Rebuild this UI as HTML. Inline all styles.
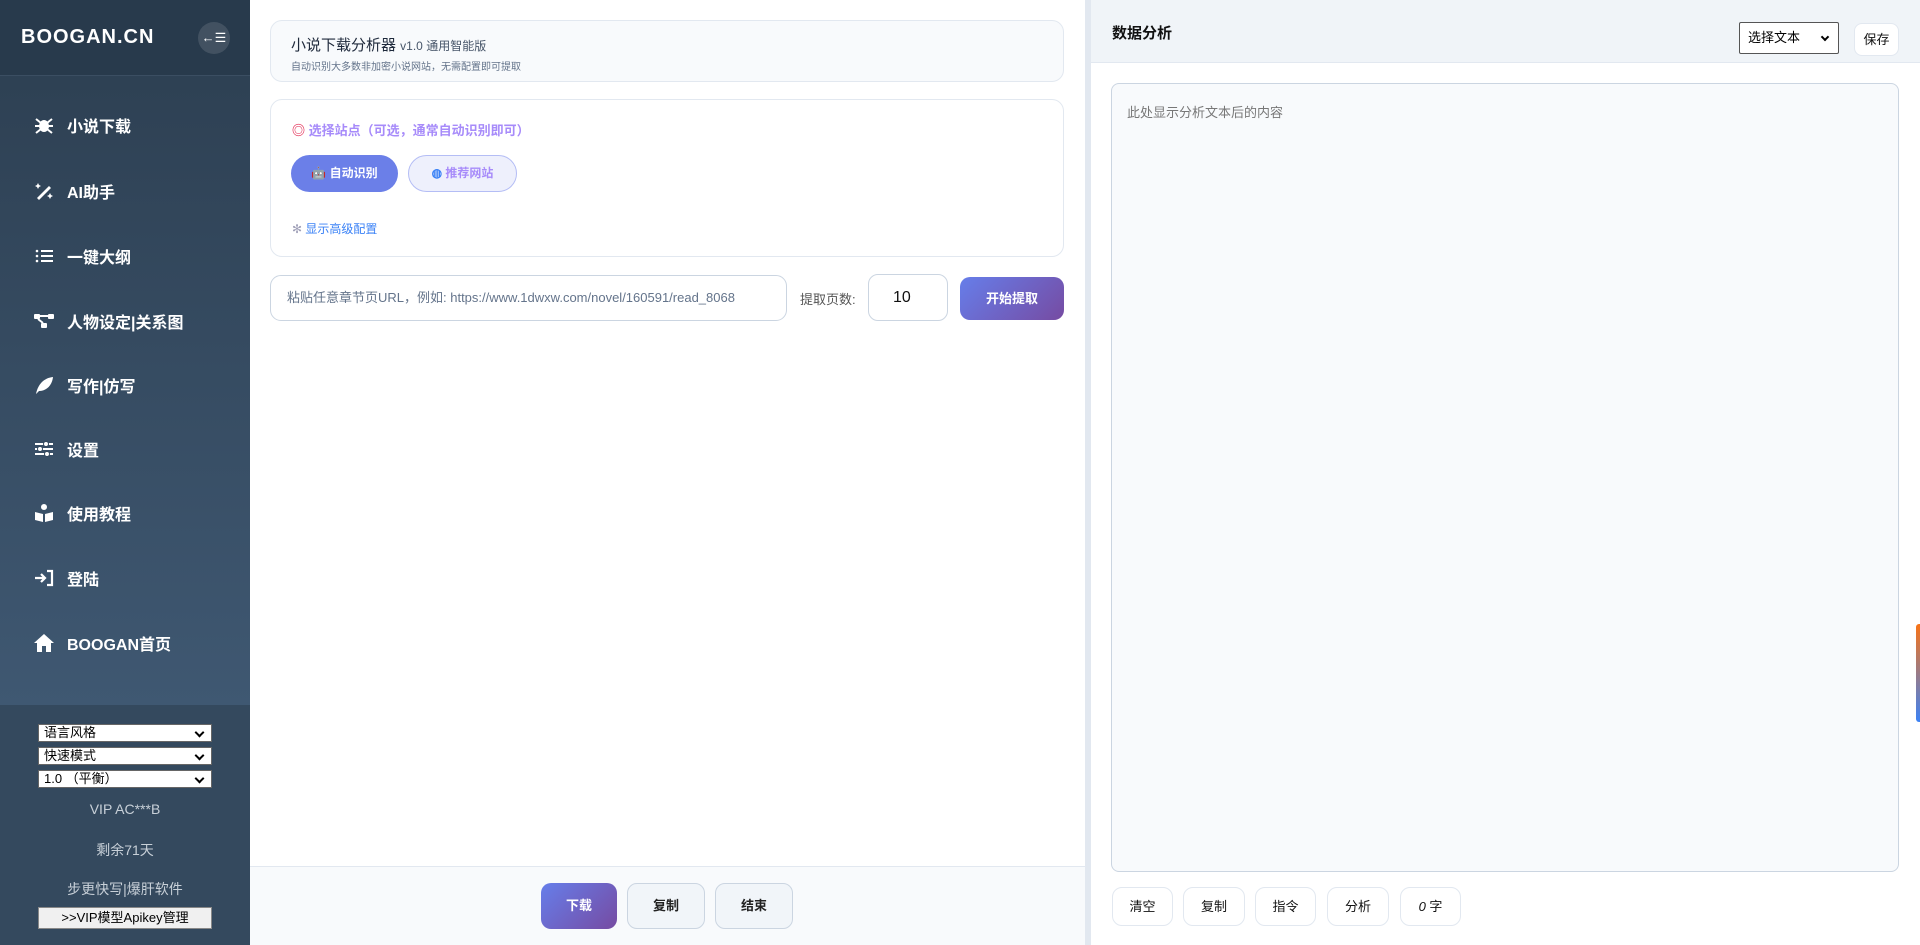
<!DOCTYPE html>
<html><head><meta charset="utf-8">
<style>
*{box-sizing:border-box;margin:0;padding:0}
body{width:1920px;height:945px;overflow:hidden;font-family:"Liberation Sans","Noto Sans CJK SC",sans-serif;background:#fff;position:relative}
.abs{position:absolute}
#sb{left:0;top:0;width:250px;height:945px;background:linear-gradient(180deg,#2c3e50 0%,#3f5872 75%);}
#sbh{left:0;top:0;width:250px;height:76px;background:#283a4c;border-bottom:1px solid #3b4e62}
.logo{left:21px;top:26px;color:#fff;font-size:20px;font-weight:bold;letter-spacing:1px}
.tog{left:198px;top:22px;width:32px;height:32px;border-radius:50%;background:rgba(255,255,255,.12);color:#fff;font-size:13px;line-height:32px;text-align:center}
.nav{left:34px;color:#fff;font-size:16px;font-weight:bold;display:flex;align-items:center;height:24px}
.nav svg{width:20px;height:20px;margin-right:13px;fill:#fff}
#sbb{left:0;top:705px;width:250px;height:240px;background:#34495e}
.sel{left:38px;width:174px;height:18px;background:#fff;border:1px solid #666;font-size:13px;color:#000;line-height:16px;padding-left:5px}
.sel::after{content:"";position:absolute;right:8px;top:4px;width:5px;height:5px;border-right:2px solid #000;border-bottom:2px solid #000;transform:rotate(45deg)}
.gt{left:0;width:250px;text-align:center;color:#c8d0d8;font-size:14px}
.card{border:1px solid #e2e8f0;border-radius:12px}
.btn{border-radius:10px;text-align:center;font-weight:bold;font-size:13px}
</style></head><body>
<div id="sb" class="abs"></div>
<div id="sbh" class="abs"></div>
<div class="abs logo">BOOGAN.CN</div>
<div class="abs tog">←☰</div>

<div class="abs nav" style="top:113px"><svg viewBox="0 0 20 20"><ellipse cx="10" cy="11" rx="5" ry="6"/><path d="M2 4l5 4M18 4l-5 4M1 11h5M19 11h-5M2 18l5-4M18 18l-5-4" stroke="#fff" stroke-width="2"/></svg>小说下载</div>
<div class="abs nav" style="top:179px"><svg viewBox="0 0 20 20"><path d="M3 17L15 5l2 2L5 19z"/><path d="M4 2l1 2 2 1-2 1-1 2-1-2-2-1 2-1zM16 12l1 2 2 1-2 1-1 2-1-2-2-1 2-1z"/></svg>AI助手</div>
<div class="abs nav" style="top:244px"><svg viewBox="0 0 20 20"><path d="M7 4h12v2H7zM7 9h12v2H7zM7 14h12v2H7z"/><circle cx="3" cy="5" r="1.3"/><circle cx="3" cy="10" r="1.3"/><circle cx="3" cy="15" r="1.3"/></svg>一键大纲</div>
<div class="abs nav" style="top:309px"><svg viewBox="0 0 20 20"><rect x="0" y="3" width="6" height="5" rx="1"/><rect x="14" y="3" width="6" height="5" rx="1"/><rect x="7" y="12" width="6" height="5" rx="1"/><path d="M6 5h8M4 8l5 4" stroke="#fff" stroke-width="2"/></svg>人物设定|关系图</div>
<div class="abs nav" style="top:373px"><svg viewBox="0 0 20 20"><path d="M2 19C4 9 10 3 19 2c-1 9-7 14-14 14L2 19z"/></svg>写作|仿写</div>
<div class="abs nav" style="top:437px"><svg viewBox="0 0 20 20"><path d="M1 4h18v2H1zM1 9h18v2H1zM1 14h18v2H1z"/><circle cx="12" cy="5" r="2.5" stroke="#34495e"/><circle cx="6" cy="10" r="2.5" stroke="#34495e"/><circle cx="13" cy="15" r="2.5" stroke="#34495e"/></svg>设置</div>
<div class="abs nav" style="top:501px"><svg viewBox="0 0 20 20"><circle cx="10" cy="4" r="3"/><path d="M1 9l8 2v8l-8-2zM19 9l-8 2v8l8-2z"/></svg>使用教程</div>
<div class="abs nav" style="top:566px"><svg viewBox="0 0 20 20"><path d="M1 10h10M7 6l4 4-4 4M13 3h5v14h-5" stroke="#fff" stroke-width="2.2" fill="none"/></svg>登陆</div>
<div class="abs nav" style="top:631px"><svg viewBox="0 0 20 20"><path d="M10 1L0 10h3v9h5v-6h4v6h5v-9h3z"/></svg>BOOGAN首页</div>

<div id="sbb" class="abs"></div>
<div class="abs sel" style="top:724px">语言风格</div>
<div class="abs sel" style="top:747px">快速模式</div>
<div class="abs sel" style="top:770px">1.0 （平衡）</div>
<div class="abs gt" style="top:801px">VIP AC***B</div>
<div class="abs gt" style="top:840px">剩余71天</div>
<div class="abs gt" style="top:879px">步更快写|爆肝软件</div>
<div class="abs" style="left:38px;top:907px;width:174px;height:22px;background:#f0f0f0;border:1px solid #888;font-size:13px;text-align:center;line-height:20px;color:#000">&gt;&gt;VIP模型Apikey管理</div>

<div class="abs" style="left:250px;top:0;width:835px;height:945px;background:#fff"></div>
<div class="abs card" style="left:270px;top:20px;width:794px;height:62px;background:#f8fafc"></div>
<div class="abs" style="left:291px;top:34px;font-size:15px;color:#1e293b">小说下载分析器 <span style="font-size:12px;color:#475569">v1.0 通用智能版</span></div>
<div class="abs" style="left:291px;top:58px;font-size:10px;color:#64748b">自动识别大多数非加密小说网站，无需配置即可提取</div>

<div class="abs card" style="left:270px;top:99px;width:794px;height:158px;background:#fff"></div>
<div class="abs" style="left:292px;top:120px;font-size:13px;font-weight:bold;color:#a78bfa"><span style="color:#e11d48">◎</span> 选择站点（可选，通常自动识别即可）</div>
<div class="abs" style="left:291px;top:155px;width:107px;height:37px;border-radius:19px;background:#6b7fe8;color:#fff;font-size:12px;font-weight:bold;line-height:37px;text-align:center">🤖 自动识别</div>
<div class="abs" style="left:408px;top:155px;width:109px;height:37px;border-radius:19px;background:#eef0fc;border:1px solid #b4bdf5;color:#a78bfa;font-size:12px;font-weight:bold;line-height:35px;text-align:center"><span style="color:#3b82f6">◍</span> 推荐网站</div>
<div class="abs" style="left:292px;top:220px;font-size:12px;color:#3b82f6"><span style="color:#a0a0b8">✻</span> 显示高级配置</div>

<div class="abs" style="left:270px;top:275px;width:517px;height:46px;border:1px solid #cbd5e1;border-radius:11px;font-size:13px;color:#64748b;line-height:44px;padding-left:16px;white-space:nowrap;overflow:hidden">粘贴任意章节页URL，例如: https://www.1dwxw.com/novel/160591/read_8068</div>
<div class="abs" style="left:800px;top:289px;font-size:13px;color:#555">提取页数:</div>
<div class="abs" style="left:868px;top:274px;width:80px;height:47px;border:1px solid #cbd5e1;border-radius:10px;font-size:16px;color:#111;line-height:45px;padding-left:24px">10</div>
<div class="abs btn" style="left:960px;top:277px;width:104px;height:43px;background:linear-gradient(135deg,#667eea,#764ba2);color:#fff;line-height:43px">开始提取</div>

<div class="abs" style="left:250px;top:866px;width:835px;height:79px;background:#f8fafc;border-top:1px solid #e2e8f0"></div>
<div class="abs btn" style="left:541px;top:883px;width:76px;height:46px;background:linear-gradient(135deg,#667eea,#764ba2);color:#fff;line-height:46px">下载</div>
<div class="abs btn" style="left:627px;top:883px;width:78px;height:46px;background:#f1f5f9;border:1px solid #cbd5e1;color:#222;line-height:44px">复制</div>
<div class="abs btn" style="left:715px;top:883px;width:78px;height:46px;background:#f1f5f9;border:1px solid #cbd5e1;color:#222;line-height:44px">结束</div>

<div class="abs" style="left:1085px;top:0;width:6px;height:945px;background:#e2e8f0"></div>
<div class="abs" style="left:1091px;top:0;width:829px;height:63px;background:#f0f4f8;border-bottom:1px solid #e2e8f0"></div>
<div class="abs" style="left:1112px;top:22px;font-size:15px;font-weight:bold;color:#111">数据分析</div>
<div class="abs" style="left:1739px;top:22px;width:100px;height:32px;background:#fff;border:1px solid #555;border-radius:2px;font-size:13px;line-height:30px;padding-left:8px;color:#000">选择文本<span style="position:absolute;right:10px;top:11px;width:6px;height:6px;border-right:2px solid #000;border-bottom:2px solid #000;transform:rotate(45deg)"></span></div>
<div class="abs" style="left:1854px;top:23px;width:45px;height:33px;background:#fff;border:1px solid #e2e8f0;border-radius:8px;font-size:13px;line-height:31px;text-align:center;color:#111">保存</div>
<div class="abs" style="left:1111px;top:83px;width:788px;height:789px;background:#f8fafc;border:1px solid #cbd5e1;border-radius:8px"></div>
<div class="abs" style="left:1127px;top:102px;font-size:13px;color:#777">此处显示分析文本后的内容</div>
<div class="abs btn" style="left:1112px;top:887px;width:61px;height:39px;background:#fff;border:1px solid #e2e8f0;color:#111;line-height:37px;font-weight:normal">清空</div>
<div class="abs btn" style="left:1183px;top:887px;width:62px;height:39px;background:#fff;border:1px solid #e2e8f0;color:#111;line-height:37px;font-weight:normal">复制</div>
<div class="abs btn" style="left:1255px;top:887px;width:61px;height:39px;background:#fff;border:1px solid #e2e8f0;color:#111;line-height:37px;font-weight:normal">指令</div>
<div class="abs btn" style="left:1327px;top:887px;width:62px;height:39px;background:#fff;border:1px solid #e2e8f0;color:#111;line-height:37px;font-weight:normal">分析</div>
<div class="abs btn" style="left:1400px;top:887px;width:61px;height:39px;background:#fff;border:1px solid #e2e8f0;color:#111;line-height:37px;font-weight:normal"><i>0</i> 字</div>
<div class="abs" style="left:1916px;top:624px;width:4px;height:98px;background:linear-gradient(180deg,#f97316,#3b82f6);border-radius:3px 0 0 3px"></div>
</body></html>
